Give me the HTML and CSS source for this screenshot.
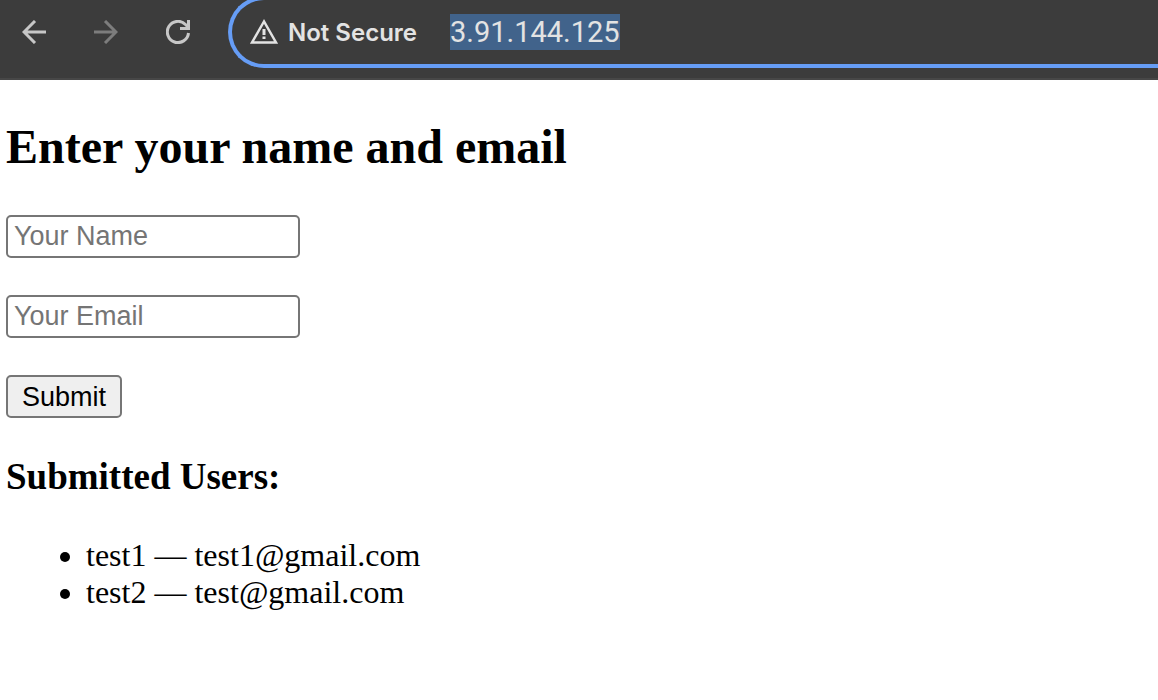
FILE: index.html
```html
<!DOCTYPE html>
<html lang="en">
<head>
<meta charset="utf-8">
<meta name="viewport" content="width=device-width, initial-scale=1">
<title>Enter your name and email</title>
<link rel="stylesheet" href="styles.css">
</head>
<body>
<header class="toolbar">
  <nav class="nav-buttons" aria-label="Browser navigation">
    <button class="nav-button" type="button" aria-label="Back">
      <svg viewBox="0 0 24 24" width="24" height="24"><path d="M24 12H2M13 1L2 12l11 11"/></svg>
    </button>
    <button class="nav-button nav-button-dim" type="button" aria-label="Forward">
      <svg viewBox="0 0 24 24" width="24" height="24"><path d="M0 12h22M11 1l11 11-11 11"/></svg>
    </button>
    <button class="nav-button" type="button" aria-label="Reload">
      <svg viewBox="0 0 24 24" width="24" height="24"><path d="M22.500 13A10.600 10.600 0 1 1 19.500 4.500l3 3M22.500 0v8.500H14"/></svg>
    </button>
  </nav>
  <div class="address-bar">
    <svg class="warning" viewBox="0 0 28 26" width="28" height="26" aria-hidden="true"><path class="warning-outline" d="M14 2.500L2 23.500h24z"/><path class="warning-mark" d="M14 10v6M14 17.500v2.500"/></svg>
    <span class="security">Not Secure</span>
    <input class="url" type="text" value="3.91.144.125" size="11" aria-label="Address">
  </div>
</header>
<main class="page">
  <h2 class="title">Enter your name and email</h2>
  <form class="user-form">
    <input class="field" type="text" placeholder="Your Name" aria-label="Your Name">
    <input class="field" type="email" placeholder="Your Email" aria-label="Your Email">
    <button class="submit" type="submit">Submit</button>
  </form>
  <h3 class="subtitle">Submitted Users:</h3>
  <ul class="users">
    <li>test1 — test1@gmail.com</li>
    <li>test2 — test@gmail.com</li>
  </ul>
</main>
</body>
</html>
```

FILE: styles.css
```css
* {
  box-sizing: border-box;
}

body {
  margin: 0;
  background: #fff;
  color: #000;
  font: 32px/37px "Liberation Serif", serif;
}

.toolbar {
  display: flex;
  align-items: flex-start;
  gap: 38px;
  padding: 0 0 10px 22px;
  overflow: hidden;
  background: #3c3c3c;
  border-bottom: 2px solid #474747;
  font-family: Inter, sans-serif;
}

.nav-buttons {
  display: flex;
  gap: 48px;
  padding-top: 20px;
}

.nav-button {
  display: block;
  padding: 0;
  border: 0;
  background: none;
  color: #c7c7c7;
}

.nav-button-dim {
  color: #7d7d7d;
}

.nav-button svg {
  display: block;
  fill: none;
  stroke: currentColor;
  stroke-width: 3;
}

.address-bar {
  display: flex;
  flex: 1;
  align-items: center;
  height: 72px;
  margin-top: -4px;
  padding-left: 18px;
  border: 4px solid #669df6;
  border-right: 0;
  border-radius: 36px 0 0 36px;
  color: #e3e3e3;
}

.warning {
  fill: none;
  stroke: currentColor;
}

.warning-outline {
  stroke-width: 2.5;
}

.warning-mark {
  stroke-width: 3;
}

.security {
  margin: 0 33px 0 10px;
  font-size: 24px;
  font-weight: 600;
}

.url {
  field-sizing: content;
  height: 36px;
  padding: 0;
  border: 0;
  background: #41638b;
  color: #e3e3e3;
  font: 29px/36px Roboto, sans-serif;
}

.page {
  padding: 39px 6px;
}

.title {
  margin: 0 0 41px;
  font-size: 48px;
  line-height: 55px;
}

.user-form {
  display: flex;
  flex-direction: column;
  align-items: flex-start;
  gap: 37px;
}

.field,
.submit {
  height: 43px;
  border: 2px solid #767676;
  border-radius: 5px;
  font: 27px/36px "Liberation Sans", sans-serif;
}

.field {
  width: 294px;
  padding: 0 6px;
  background: #fff;
  color: #000;
}

.field::placeholder {
  color: #757575;
}

.submit {
  padding: 0 14px;
  background: #efefef;
  color: #000;
}

.subtitle {
  margin: 37px 0 39px;
  font-size: 37px;
  line-height: 43px;
}

.users {
  margin: 0;
  padding-left: 80px;
}
```
